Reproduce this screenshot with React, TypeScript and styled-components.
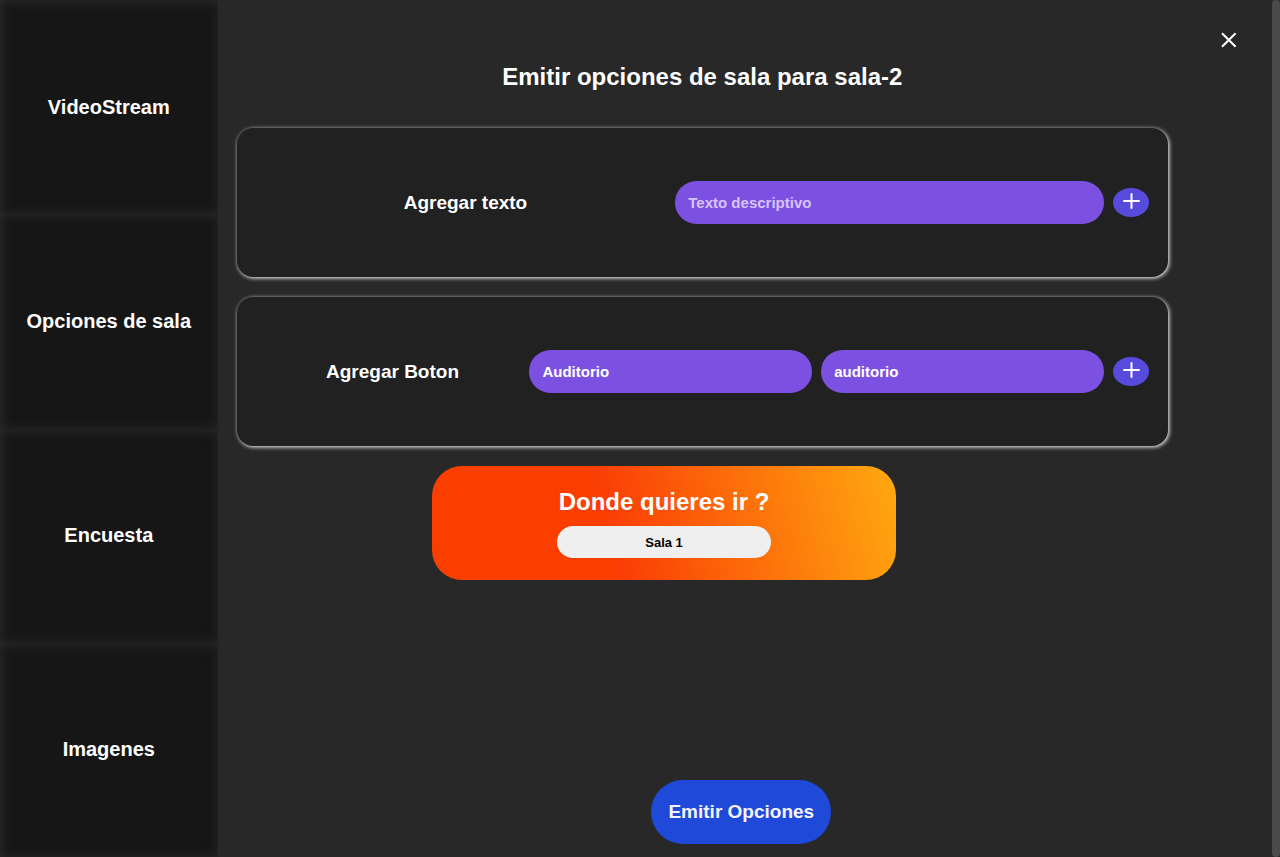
import React from "react";
import styled, { createGlobalStyle } from "styled-components";

const GlobalStyle = createGlobalStyle`
  *, *::before, *::after { box-sizing: border-box; }
  body {
    margin: 0;
    background: #282828;
    color: #fff;
    font-family: "Liberation Sans", Arial, sans-serif;
    font-weight: 700;
  }
  button, input { font: inherit; border: 0; }
  button { cursor: pointer; }
`;

const Page = styled.div`
  display: grid;
  grid-template-columns: 17% minmax(0, 1fr) 8px;
  min-height: 100vh;
`;

const Sidebar = styled.nav`
  display: grid;
  grid-auto-rows: 1fr;
`;

const SidebarItem = styled.button`
  padding: 0 16px;
  background: #161616;
  color: #fff;
  font-size: 20px;
  box-shadow: inset 1px 1px 12px #2c2c2c;
`;

const Main = styled.main`
  display: flex;
  flex-direction: column;
  padding: 24px 8px 13px 19px;
`;

const TopBar = styled.div`
  display: flex;
  justify-content: flex-end;
  height: 32px;
  padding-right: 19px;
`;

const CloseButton = styled.button`
  display: flex;
  align-items: center;
  justify-content: center;
  width: 32px;
  height: 32px;
  padding: 0;
  background: none;
  color: #fff;
`;

const Content = styled.div`
  display: flex;
  flex-direction: column;
  flex: 1;
  padding-right: 96px;
`;

const Title = styled.h1`
  margin: 6px 0 36px;
  font-size: 24px;
  line-height: 30px;
  text-align: center;
`;

const Card = styled.form`
  display: flex;
  align-items: center;
  height: 149px;
  margin-bottom: 20px;
  padding: 0 19px;
  border-radius: 16px;
  background: #212121;
  box-shadow: 1px 1px 4px #fff;
`;

const CardLabel = styled.label<{ $share: number }>`
  flex: ${(p) => p.$share} 1 0;
  font-size: 19px;
  text-align: center;
`;

const Controls = styled.div<{ $share: number }>`
  display: flex;
  flex: ${(p) => p.$share} 1 0;
  align-items: center;
  gap: 9px;
`;

const TextField = styled.input`
  flex: 1 1 0;
  min-width: 0;
  height: 43px;
  padding: 0 13px;
  border-radius: 22px;
  outline: none;
  background: #7c51e1;
  color: #fff;
  font-size: 15px;
  &::placeholder { color: #d9c4fa; opacity: 1; }
`;

const AddButton = styled.button`
  display: flex;
  justify-content: center;
  width: 36px;
  height: 29px;
  padding: 4px 0 0;
  border-radius: 50%;
  background: #564bdb;
  color: #fff;
`;

const Preview = styled.section`
  display: flex;
  flex-direction: column;
  align-items: center;
  width: calc(50% - 2px);
  height: 114px;
  margin-left: 21%;
  padding-top: 21px;
  border-radius: 30px;
  background: linear-gradient(75deg, #fa3e00 37%, #fa3e05 39%, #ffa910 100%);
`;

const PreviewTitle = styled.h2`
  margin: 0 0 9px;
  font-size: 24px;
  line-height: 30px;
`;

const RoomButton = styled.button`
  width: 46%;
  height: 32px;
  border-radius: 16px;
  background: #efefef;
  color: #000;
  font-size: 13px;
`;

const Footer = styled.footer`
  display: flex;
  justify-content: center;
  padding-right: 18px;
`;

const SubmitButton = styled.button`
  height: 64px;
  padding: 0 17px;
  border-radius: 32px;
  background: #1f49d9;
  color: #f4f4ff;
  font-size: 19px;
`;

const ScrollTrack = styled.div`
  display: flex;
  background: #282828;
`;

const ScrollThumb = styled.div`
  flex: 1;
  border-radius: 4px;
  background: #4b4b4b;
`;

const PlusIcon = () => (
  <svg width="18" height="18" viewBox="0 0 18 18" fill="none" stroke="currentColor" strokeWidth="2" strokeLinecap="round" aria-hidden="true">
    <path d="M9.5 2v14M2 9h15" />
  </svg>
);

const CloseIcon = () => (
  <svg width="16" height="16" viewBox="0 0 16 16" fill="none" stroke="currentColor" strokeWidth="2" aria-hidden="true">
    <path d="M1 1.200l13.600 13.600M14.600 1.200l-13.600 13.600" />
  </svg>
);

const sections = ["VideoStream", "Opciones de sala", "Encuesta", "Imagenes"];

export default function App() {
  return (
    <>
      <GlobalStyle />
      <Page>
        <Sidebar>
          {sections.map((name) => (
            <SidebarItem key={name} type="button">{name}</SidebarItem>
          ))}
        </Sidebar>
        <Main>
          <TopBar>
            <CloseButton type="button" aria-label="Cerrar"><CloseIcon /></CloseButton>
          </TopBar>
          <Content>
            <Title>Emitir opciones de sala para sala-2</Title>
            <Card onSubmit={(e) => e.preventDefault()}>
              <CardLabel $share={420} htmlFor="texto">Agregar texto</CardLabel>
              <Controls $share={474}>
                <TextField id="texto" placeholder="Texto descriptivo" />
                <AddButton aria-label="Agregar texto"><PlusIcon /></AddButton>
              </Controls>
            </Card>
            <Card onSubmit={(e) => e.preventDefault()}>
              <CardLabel $share={274} htmlFor="boton">Agregar Boton</CardLabel>
              <Controls $share={620}>
                <TextField id="boton" defaultValue="Auditorio" />
                <TextField aria-label="Sala de destino" defaultValue="auditorio" />
                <AddButton aria-label="Agregar boton"><PlusIcon /></AddButton>
              </Controls>
            </Card>
            <Preview>
              <PreviewTitle>Donde quieres ir ?</PreviewTitle>
              <RoomButton type="button">Sala 1</RoomButton>
            </Preview>
          </Content>
          <Footer>
            <SubmitButton type="button">Emitir Opciones</SubmitButton>
          </Footer>
        </Main>
        <ScrollTrack><ScrollThumb /></ScrollTrack>
      </Page>
    </>
  );
}
